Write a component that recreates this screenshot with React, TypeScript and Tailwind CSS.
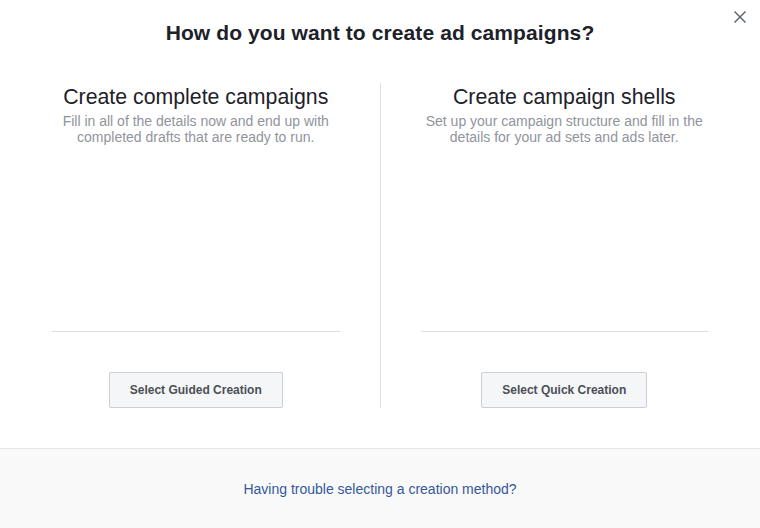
import React from "react";

function Column({ title, desc, button }: { title: string; desc: string[]; button: string }) {
  return (
    <div className="w-[288px] flex flex-col items-center">
      <div className="mt-[2px] text-[21.3px] leading-[24px] text-[#1d2129] text-center whitespace-nowrap">{title}</div>
      <div className="mt-[4px] text-[14px] leading-[16px] text-[#90949c] text-center">
        {desc.map((d, i) => (
          <div key={i} className="whitespace-nowrap">{d}</div>
        ))}
      </div>
      <div className="flex-1" />
      <div className="w-full h-px bg-[#dddfe2]" />
      <button className="mt-10 h-[36px] px-5 border border-[#ccd0d5] bg-[#f5f6f7] rounded-[2px] text-[12px] font-bold text-[#4b4f56] whitespace-nowrap">
        {button}
      </button>
    </div>
  );
}

export default function App() {
  return (
    <div className="relative w-[760px] h-[528px] bg-white flex flex-col font-['Liberation_Sans',Arial,sans-serif]">
      <button className="absolute right-[14px] top-[11px] w-[12px] h-[12px]" aria-label="Close">
        <svg width="12" height="12" viewBox="0 0 12 12">
          <path d="M0.5 0.5 L11.5 11.5 M11.5 0.5 L0.5 11.5" stroke="#606770" strokeWidth="1.5" />
        </svg>
      </button>
      <div className="h-[83px] pt-[20px] text-center">
        <div className="text-[21px] leading-[26px] font-bold text-[#1d2129] tracking-[0.1px]">
          How do you want to create ad campaigns?
        </div>
      </div>
      <div className="h-[325px] flex px-[52px]">
        <Column
          title="Create complete campaigns"
          desc={["Fill in all of the details now and end up with", "completed drafts that are ready to run."]}
          button="Select Guided Creation"
        />
        <div className="mx-10 w-px bg-[#dddfe2]" />
        <Column
          title="Create campaign shells"
          desc={["Set up your campaign structure and fill in the", "details for your ad sets and ads later."]}
          button="Select Quick Creation"
        />
      </div>
      <div className="h-[40px]" />
      <div className="flex-1 border-t border-[#e5e5e5] bg-[#f9f9f9] flex items-center justify-center">
        <a className="text-[14px] text-[#365899] leading-[18px] cursor-pointer">Having trouble selecting a creation method?</a>
      </div>
    </div>
  );
}
